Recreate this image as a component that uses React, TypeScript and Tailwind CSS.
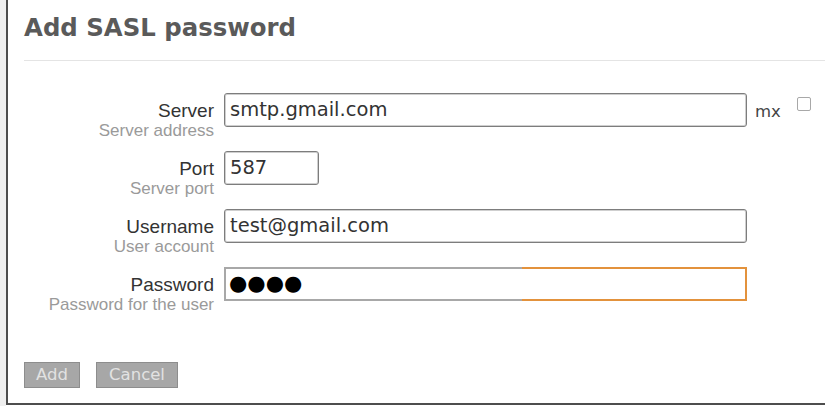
import React from 'react'

const sans = "font-['Liberation_Sans',Arial,sans-serif]"
const deja = "font-['DejaVu_Sans',Verdana,sans-serif]"

type FieldProps = {
  label: string
  hint: string
  children: React.ReactNode
}

function Field({ label, hint, children }: FieldProps) {
  return (
    <div className="flex h-[58px] items-start">
      <div className={`w-[190px] shrink-0 pt-[8px] text-right ${sans}`}>
        <div className="text-[19px] leading-[20px] text-[#333]">{label}</div>
        <div className="mt-px text-[17px] leading-[18px] text-[#9a9a9a]">{hint}</div>
      </div>
      <div className="ml-[10px] flex items-start">{children}</div>
    </div>
  )
}

function TextBox({ value, width = 'w-[523px]' }: { value: string; width?: string }) {
  return (
    <div
      className={`${width} flex h-[34px] items-center rounded-[3px] border border-[#7d7d7d] bg-white pl-[5px] shadow-[inset_0_0_0_1px_#cfcfcf] ${deja} text-[19.5px] text-[#333]`}
    >
      {value}
    </div>
  )
}

export default function App() {
  return (
    <div className="flex h-[406px] w-[828px] bg-white">
      <div className="w-[6px] shrink-0 bg-[#efefef]" />
      <div className="h-[405px] w-[819px] shrink-0 border-b-2 border-l-2 border-[#4d4d4d] bg-white">
        {/* header */}
        <div className="pl-[16px] pt-[14px]">
          <h1 className={`${deja} text-[24.4px] font-bold leading-[28px] text-[#5a5a5a]`}>Add SASL password</h1>
        </div>
        <div className="ml-[16px] mt-[18px] h-px bg-[#e4e4e4]" />

        {/* form */}
        <div className="mt-[32px] pl-[16px]">
          <Field label="Server" hint="Server address">
            <TextBox value="smtp.gmail.com" />
            <span className={`ml-[8px] mt-[9px] ${deja} text-[16.5px] leading-[20px] text-[#444]`}>mx</span>
            <span className="ml-[16px] mt-[4px] h-[14px] w-[14px] rounded-[2px] border border-[#a8a8a8] bg-white" />
          </Field>
          <Field label="Port" hint="Server port">
            <TextBox value="587" width="w-[95px]" />
          </Field>
          <Field label="Username" hint="User account">
            <TextBox value="test@gmail.com" />
          </Field>
          <Field label="Password" hint="Password for the user">
            <div
              className={`flex h-[34px] w-[523px] items-center border-2 bg-white pl-[3px] [border-image:linear-gradient(to_right,#a8a8a8_57%,#e3923c_57%)_1] ${deja} text-[21px] text-black`}
            >
              ●●●●
            </div>
          </Field>

          {/* actions */}
          <div className={`mt-[37px] flex gap-[16px] ${deja} text-[16.5px] text-[#e2e2e2]`}>
            <button className="flex h-[26px] w-[56px] items-center justify-center border border-[#8d8d8d] bg-[#a7a7a7]">
              Add
            </button>
            <button className="flex h-[26px] w-[82px] items-center justify-center border border-[#8d8d8d] bg-[#a7a7a7]">
              Cancel
            </button>
          </div>
        </div>
      </div>
    </div>
  )
}
